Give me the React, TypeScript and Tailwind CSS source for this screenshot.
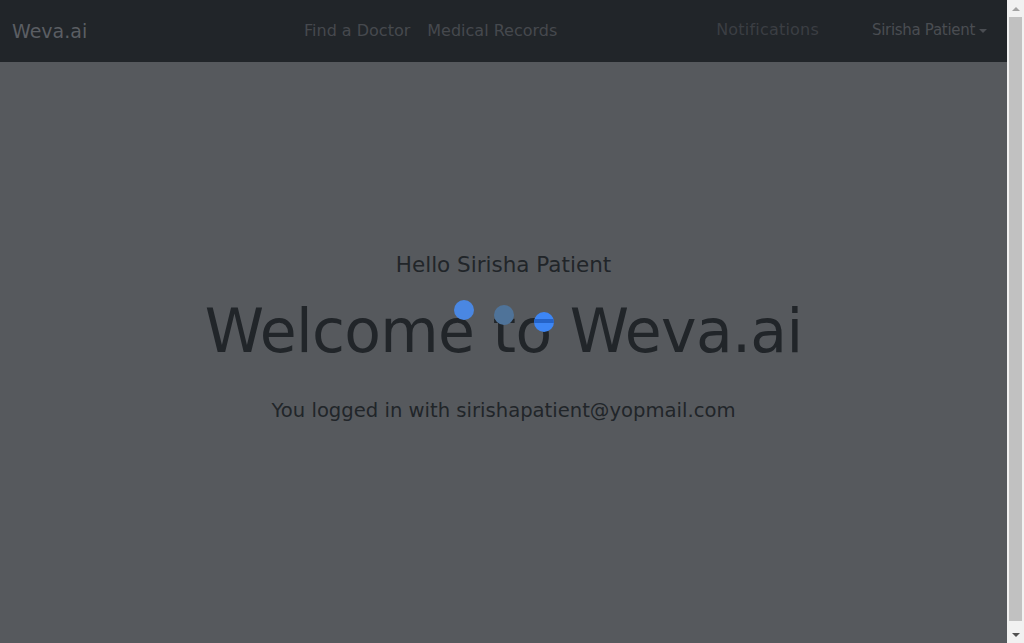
import React from "react";

// 로딩 중 점 3개 — 오버레이 위에 떠 있음
function LoadingDots() {
  return (
    <div className="pointer-events-none absolute inset-0">
      <div className="absolute left-[454px] top-[300px] h-[20px] w-[20px] rounded-full bg-[#4a87e2]" />
      <div className="absolute left-[494px] top-[305px] h-[20px] w-[20px] rounded-full bg-[#4f7399]" />
      <div className="absolute left-[534px] top-[312px] h-[20px] w-[20px] overflow-hidden rounded-full bg-[#3d86f5]">
        <div className="mt-[7px] h-[4px] w-full bg-[#2563c7]" />
      </div>
    </div>
  );
}

// 브라우저 스크롤바 흉내
function Scrollbar() {
  return (
    <div className="flex w-[17px] shrink-0 flex-col items-center bg-[#f1f1f1]">
      <div className="flex h-[17px] items-center justify-center">
        <span className="h-0 w-0 border-x-[4px] border-b-[4px] border-x-transparent border-b-[#a3a3a3]" />
      </div>
      <div className="mb-[5px] w-[13px] flex-1 bg-[#c1c1c1]" />
      <div className="flex h-[17px] items-center justify-center">
        <span className="h-0 w-0 border-x-[4px] border-t-[4px] border-x-transparent border-t-[#505050]" />
      </div>
    </div>
  );
}

export default function App() {
  return (
    <div
      className="flex h-[643px] overflow-hidden"
      style={{ fontFamily: '"DejaVu Sans", "Open Sans", sans-serif' }}
    >
      <div className="relative flex-1 bg-[#56595d]">
        <nav className="flex h-[62px] items-center bg-[#212529] pl-[12px] pr-[20px]">
          <div className="w-[292px] text-[19px] text-[#5b5e63]">Weva.ai</div>
          <div className="flex gap-[17px] text-[16px] text-[#46494e]">
            <span>Find a Doctor</span>
            <span>Medical Records</span>
          </div>
          <div className="ml-auto flex items-center gap-[53px] text-[16px] text-[#3b3e43]">
            <span className="-mt-[2px] tracking-[0.2px]">Notifications</span>
            <span className="-mt-[2px] flex items-center gap-[4px] text-[15px] tracking-[-0.3px] text-[#4a4d52]">
              Sirisha Patient
              <span className="mt-[1px] h-0 w-0 border-x-[4px] border-t-[4px] border-x-transparent border-t-[#4a4d52]" />
            </span>
          </div>
        </nav>
        <main className="flex flex-col items-center pt-[188px] text-[#212529]">
          <h4 className="text-[21.5px] leading-[30px]">Hello Sirisha Patient</h4>
          <h1 className="mt-[13px] text-[60px] leading-[76px] tracking-[-0.7px]">Welcome to Weva.ai</h1>
          <p className="mt-[27px] text-[19.6px] leading-[30px]">
            You logged in with sirishapatient@yopmail.com
          </p>
        </main>
        <LoadingDots />
      </div>
      <Scrollbar />
    </div>
  );
}
